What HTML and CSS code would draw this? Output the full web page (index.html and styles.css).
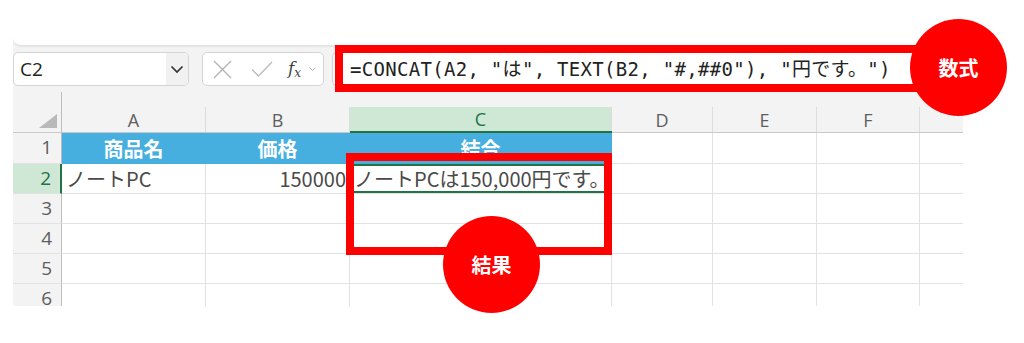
FILE: index.html
```html
<!DOCTYPE html>
<html lang="ja">
<head>
    <meta charset="UTF-8">
    <meta name="viewport" content="width=device-width, initial-scale=1.0">
    <title>CONCAT と TEXT</title>
    <link rel="stylesheet" href="styles.css">
</head>
<body>

<div class="app">
    <div class="ribbon"></div>

    <div class="formula-bar">
        <div class="name-box">
            <span class="name-value">C2</span>
            <span class="name-drop">
                <svg width="14" height="9" viewBox="0 0 14 9"><polyline points="1.5,1.5 7,7 12.5,1.5" fill="none" stroke="#333" stroke-width="1.7"/></svg>
            </span>
        </div>
        <div class="fx-box">
            <svg class="icon-x" width="19" height="19" viewBox="0 0 19 19"><path d="M1 1 L18 18 M18 1 L1 18" stroke="#b4b4b4" stroke-width="1.4" fill="none"/></svg>
            <svg class="icon-ok" width="22" height="16" viewBox="0 0 22 16"><polyline points="1,8.5 7.5,15 21,1" fill="none" stroke="#bcbcbc" stroke-width="1.4"/></svg>
            <span class="fx"><i>f</i><sub>x</sub></span>
            <svg class="icon-more" width="7" height="5" viewBox="0 0 7 5"><polyline points="0.5,0.5 3.5,3.5 6.5,0.5" fill="none" stroke="#b8b8b8" stroke-width="1"/></svg>
        </div>
        <div class="formula-input">=CONCAT(A2, "は", TEXT(B2, "#,##0"), "円です。")</div>
    </div>

    <div class="sheet">
        <div class="corner">
            <svg width="18" height="14" viewBox="0 0 18 14"><polygon points="18,0 18,14 0,14" fill="#b9b9b9"/></svg>
        </div>
        <div class="ch"><div class="ch-in">A</div></div>
        <div class="ch"><div class="ch-in">B</div></div>
        <div class="ch sel"><div class="ch-in">C</div></div>
        <div class="ch"><div class="ch-in">D</div></div>
        <div class="ch"><div class="ch-in">E</div></div>
        <div class="ch"><div class="ch-in">F</div></div>
        <div class="ch"><div class="ch-in last"></div></div>

        <div class="rh">1</div>
        <div class="c hd">商品名</div>
        <div class="c hd">価格</div>
        <div class="c hd">結合</div>
        <div class="c"></div><div class="c"></div><div class="c"></div><div class="c last"></div>

        <div class="rh sel">2</div>
        <div class="c">ノートPC</div>
        <div class="c num">150000</div>
        <div class="c active">ノートPCは150,000円です。<span class="handle"></span></div>
        <div class="c"></div><div class="c"></div><div class="c"></div><div class="c last"></div>

        <div class="rh">3</div>
        <div class="c"></div><div class="c"></div><div class="c"></div><div class="c"></div><div class="c"></div><div class="c"></div><div class="c last"></div>

        <div class="rh">4</div>
        <div class="c"></div><div class="c"></div><div class="c"></div><div class="c"></div><div class="c"></div><div class="c"></div><div class="c last"></div>

        <div class="rh">5</div>
        <div class="c"></div><div class="c"></div><div class="c"></div><div class="c"></div><div class="c"></div><div class="c"></div><div class="c last"></div>

        <div class="rh">6</div>
        <div class="c"></div><div class="c"></div><div class="c"></div><div class="c"></div><div class="c"></div><div class="c"></div><div class="c last"></div>
    </div>
</div>

<!-- annotations -->
<div class="mark mark-formula"></div>
<div class="badge badge-formula">数式</div>
<div class="mark mark-result"></div>
<div class="badge badge-result">結果</div>

</body>
</html>
```

FILE: styles.css
```css
:root {
    --grey: #f3f3f3;
    --grid: #e2e2e2;
    --green: #217346;
    --green-bg: #cfe8d6;
    --blue: #46afe0;
    --red: #ff0000;
}

body {
    margin: 0;
    background: #fff;
    font-family: "Noto Sans CJK JP", sans-serif;
}

.app {
    margin: 38px 0 0 13px;
    width: 950px;
    height: 268px;
    background: var(--grey);
    overflow: hidden;
}

.ribbon {
    height: 7px;
    background: #fff;
    border-bottom: 1px solid #e2e2e2;
    border-radius: 0 0 8px 8px;
    box-shadow: 0 1px 2px rgba(0,0,0,0.06);
}

/* Formula bar */
.formula-bar {
    display: flex;
    height: 34px;
    margin-top: 6px;
}

.name-box {
    width: 176px;
    display: flex;
    background: #fff;
    border: 1px solid #d4d4d4;
    border-radius: 5px;
    box-sizing: border-box;
    overflow: hidden;
}
.name-value {
    flex: 1;
    padding-left: 6px;
    font-family: "Open Sans", sans-serif;
    font-size: 19px;
    line-height: 32px;
    color: #222;
}
.name-drop {
    width: 22px;
    background: #f1f1f1;
    display: flex;
    align-items: center;
    justify-content: center;
}

.fx-box {
    width: 122px;
    margin-left: 13px;
    display: flex;
    align-items: center;
    background: #fff;
    border: 1px solid #d4d4d4;
    border-radius: 5px;
    box-sizing: border-box;
    padding-left: 10px;
}
.icon-ok { margin-left: 19px; }
.fx {
    margin-left: 15px;
    font-family: "DejaVu Serif", serif;
    font-size: 17px;
    color: #444;
    line-height: 1;
}
.fx i { font-style: italic; }
.fx sub { font-size: 12px; font-style: italic; vertical-align: -3px; }
.icon-more { margin-left: 8px; }

.formula-input {
    flex: 1;
    margin-left: 8px;
    padding-left: 17px;
    background: #fff;
    border: 1px solid #d4d4d4;
    border-radius: 5px 0 0 5px;
    border-right: none;
    font-family: "DejaVu Sans Mono", "Noto Sans CJK JP", monospace;
    font-size: 19px;
    letter-spacing: 0.3px;
    line-height: 32px;
    color: #222;
    white-space: nowrap;
    overflow: hidden;
}

/* Sheet */
.sheet {
    margin-top: 6px;
    display: grid;
    grid-template-columns: 49px 144px 144px 262px 101px 104px 103px 43px;
    grid-template-rows: 41px 31px;
    grid-auto-rows: 30px;
}
.sheet > div { box-sizing: border-box; }

.corner {
    display: flex;
    align-items: flex-end;
    justify-content: flex-end;
    padding: 0 4px 4px 0;
    border-right: 1px solid #bdbdbd;
    border-bottom: 1px solid #c9c9c9;
}

.ch {
    display: flex;
    flex-direction: column;
    border-bottom: 1px solid #c9c9c9;
}
.ch-in {
    flex: 1;
    margin-top: 15px;
    display: flex;
    align-items: center;
    justify-content: center;
    border-right: 1px solid #dcdcdc;
    font-family: "Open Sans", sans-serif;
    font-size: 18px;
    color: #5e5e5e;
}
.ch-in.last { border-right: none; }
.ch.sel { border-bottom: 2px solid var(--green); }
.ch.sel .ch-in { background: var(--green-bg); color: var(--green); }

.rh {
    background: var(--grey);
    border-right: 1px solid #bdbdbd;
    border-bottom: 1px solid var(--grid);
    text-align: right;
    padding-right: 9px;
    font-family: "Open Sans", sans-serif;
    font-size: 19px;
    line-height: 29px;
    color: #5e5e5e;
}
.rh.sel {
    background: var(--green-bg);
    color: var(--green);
    border-right: 2px solid var(--green);
}

.c {
    position: relative;
    background: #fff;
    border-right: 1px solid var(--grid);
    border-bottom: 1px solid var(--grid);
    display: flex;
    align-items: center;
    padding: 0 4px;
    font-size: 20px;
    color: #4a4a4a;
    white-space: nowrap;
}
.c.last { border-right: none; }
.c.num { justify-content: flex-end; padding-right: 3px; }
.c.hd {
    background: var(--blue);
    border-color: var(--blue);
    color: #fff;
    font-weight: 700;
    font-size: 20px;
    justify-content: center;
}
.c.active {
    box-shadow: inset 0 2px 0 var(--green), inset 0 -2px 0 var(--green);
}
.handle {
    position: absolute;
    right: -4px;
    bottom: -3px;
    width: 5px;
    height: 5px;
    background: var(--green);
    border: 1px solid #fff;
}

/* Red annotations */
.mark {
    position: absolute;
    border: 8px solid var(--red);
    box-sizing: border-box;
}
.mark-formula { left: 335px; top: 45px; width: 600px; height: 47px; }
.mark-result { left: 346px; top: 153px; width: 266px; height: 102px; }

.badge {
    position: absolute;
    width: 97px;
    height: 97px;
    border-radius: 50%;
    background: var(--red);
    color: #fff;
    font-weight: 700;
    font-size: 20px;
    display: flex;
    align-items: center;
    justify-content: center;
}
.badge-formula { left: 910px; top: 19px; }
.badge-result { left: 443px; top: 216px; }
```
